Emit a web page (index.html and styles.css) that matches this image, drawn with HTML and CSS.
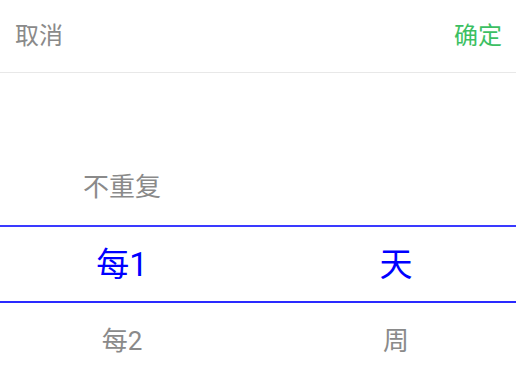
FILE: index.html
```html
<!DOCTYPE html>
<html lang="zh-CN">
<head>
<meta charset="utf-8">
<title>重复</title>
<link rel="stylesheet" href="styles.css">
</head>
<body>
<div class="sheet">
  <div class="toolbar">
    <span class="btn cancel">取消</span>
    <span class="btn confirm">确定</span>
  </div>
  <div class="picker">
    <div class="row"><span class="cell"></span><span class="cell"></span></div>
    <div class="row"><span class="cell">不重复</span><span class="cell"></span></div>
    <div class="row selected"><span class="cell">每1</span><span class="cell">天</span></div>
    <div class="row"><span class="cell">每2</span><span class="cell">周</span></div>
  </div>
</div>
</body>
</html>
```

FILE: styles.css
```css
* { box-sizing: border-box; }
html, body {
  margin: 0;
  padding: 0;
  background: #ffffff;
}
body {
  font-family: Roboto, "Noto Sans CJK SC", sans-serif;
  overflow: hidden;
}
.sheet {
  width: 516px;
  height: 376px;
  overflow: hidden;
}
.toolbar {
  height: 73px;
  display: flex;
  align-items: center;
  justify-content: space-between;
  padding: 0 14px 1px 15px;
  border-bottom: 1px solid #e8e8e8;
}
.btn {
  font-size: 24px;
  line-height: 1;
}
.cancel { color: #8a8a8a; }
.confirm { color: #3cbf62; }
.picker {
  display: flex;
  flex-direction: column;
}
.row {
  height: 76px;
  display: grid;
  grid-template-columns: 244px 240px;
  justify-content: space-between;
  align-items: center;
  font-size: 26px;
  color: #8a8a8a;
}
.cell {
  text-align: center;
  line-height: 1;
}
.row.selected {
  height: 78px;
  border-top: 2px solid #3a3aff;
  border-bottom: 2px solid #2a2aff;
  color: #0000ff;
  font-size: 33px;
}
```
